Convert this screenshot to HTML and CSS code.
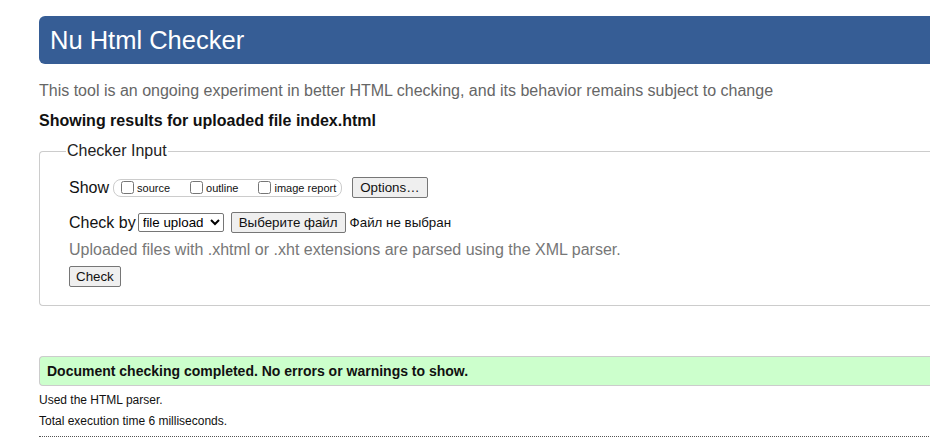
FILE: index.html
```html
<!DOCTYPE html>
<html lang="en">
<head>
<meta charset="utf-8">
<title>Nu Html Checker</title>
<link rel="stylesheet" href="styles.css">
</head>
<body>
<div class="page">
  <h1 class="brand">Nu Html Checker</h1>
  <p class="intro">This tool is an ongoing experiment in better HTML checking, and its behavior remains subject to change</p>
  <p class="showing">Showing results for uploaded file index.html</p>
  <fieldset class="input">
    <legend>Checker Input</legend>
    <div class="row show-row">
      <span class="lbl">Show</span>
      <span class="opts">
        <label><input type="checkbox">source</label>
        <label><input type="checkbox">outline</label>
        <label><input type="checkbox">image report</label>
      </span>
      <button class="btn">Options…</button>
    </div>
    <div class="row check-row">
      <span class="lbl">Check by</span>
      <select class="sel"><option>file upload</option></select>
      <button class="btn file-btn">Выберите файл</button>
      <span class="nofile">Файл не выбран</span>
    </div>
    <p class="note">Uploaded files with .xhtml or .xht extensions are parsed using the XML parser.</p>
    <button class="btn check-btn">Check</button>
  </fieldset>
  <p class="success">Document checking completed. No errors or warnings to show.</p>
  <p class="meta">Used the HTML parser.</p>
  <p class="meta">Total execution time 6 milliseconds.</p>
  <hr class="dots">
</div>
</body>
</html>
```

FILE: styles.css
```css
html, body {
  margin: 0;
  padding: 0;
  overflow: hidden;
  background: #fff;
}
body {
  font-family: "Liberation Sans", Arial, sans-serif;
  color: #111;
}
.page {
  width: 1000px;
  padding: 16px 0 0 39px;
}
.brand {
  margin: 0;
  height: 48px;
  line-height: 48px;
  background: #365d95;
  color: #fff;
  font-size: 25.5px;
  font-weight: normal;
  padding-left: 11px;
  border-radius: 6px 0 0 6px;
}
.intro {
  margin: 17px 0 0;
  font-size: 16px;
  line-height: 20px;
  color: #666;
}
.showing {
  margin: 10px 0 0;
  font-size: 16px;
  line-height: 20px;
  font-weight: bold;
  color: #111;
}
.input {
  margin: 11px 0 0;
  padding: 17px 0 18px 29px;
  border: 1px solid #ccc;
  border-right: none;
  border-radius: 4px 0 0 4px;
  min-width: 0;
}
.input legend {
  font-size: 16px;
  padding: 0 1px;
  margin-left: -3px;
  color: #222;
}
.row {
  display: flex;
  align-items: center;
  font-size: 16px;
}
.lbl {
  margin-right: 4px;
}
.opts {
  display: inline-flex;
  align-items: center;
  gap: 20px;
  border: 1px solid #ccc;
  border-radius: 8px;
  height: 16px;
  padding: 0 5px 0 7px;
  font-size: 11px;
}
.opts label {
  display: inline-flex;
  align-items: center;
  gap: 3px;
}
.opts input {
  width: 13px;
  height: 13px;
  margin: 0;
}
.btn {
  font-family: "Liberation Sans", Arial, sans-serif;
  font-size: 13.33px;
  height: 21px;
  padding: 0 7px;
  border: 1px solid #767676;
  border-radius: 2px;
  background: #efefef;
  color: #111;
}
.show-row .btn {
  margin-left: 10px;
}
.check-row {
  margin-top: 14px;
}
.sel {
  font-family: "Liberation Sans", Arial, sans-serif;
  font-size: 13.33px;
  height: 19px;
  width: 86px;
  margin-left: -2px;
  border: 1px solid #767676;
  border-radius: 2px;
  background: #fff;
}
.file-btn {
  margin-left: 7px;
}
.nofile {
  font-size: 13.33px;
  margin-left: 4px;
}
.note {
  margin: 7px 0 0;
  font-size: 16px;
  line-height: 20px;
  color: #777;
}
.check-btn {
  margin-top: 6px;
  padding: 0 6px;
}
.success {
  margin: 50px 0 0;
  height: 28px;
  line-height: 28px;
  background: #ccffcc;
  border-top: 1px solid #ccc;
  border-bottom: 1px solid #ccc;
  border-left: 1px solid #ccc;
  border-radius: 4px 0 0 4px;
  padding-left: 7px;
  font-size: 14px;
  font-weight: bold;
  color: #111;
}
.meta {
  margin: 7px 0 0;
  font-size: 12px;
  line-height: 14px;
}
.meta + .meta {
  margin-top: 7px;
}
.dots {
  margin: 8px 0 0;
  border: none;
  border-top: 1px dotted #555;
  height: 0;
}
```
